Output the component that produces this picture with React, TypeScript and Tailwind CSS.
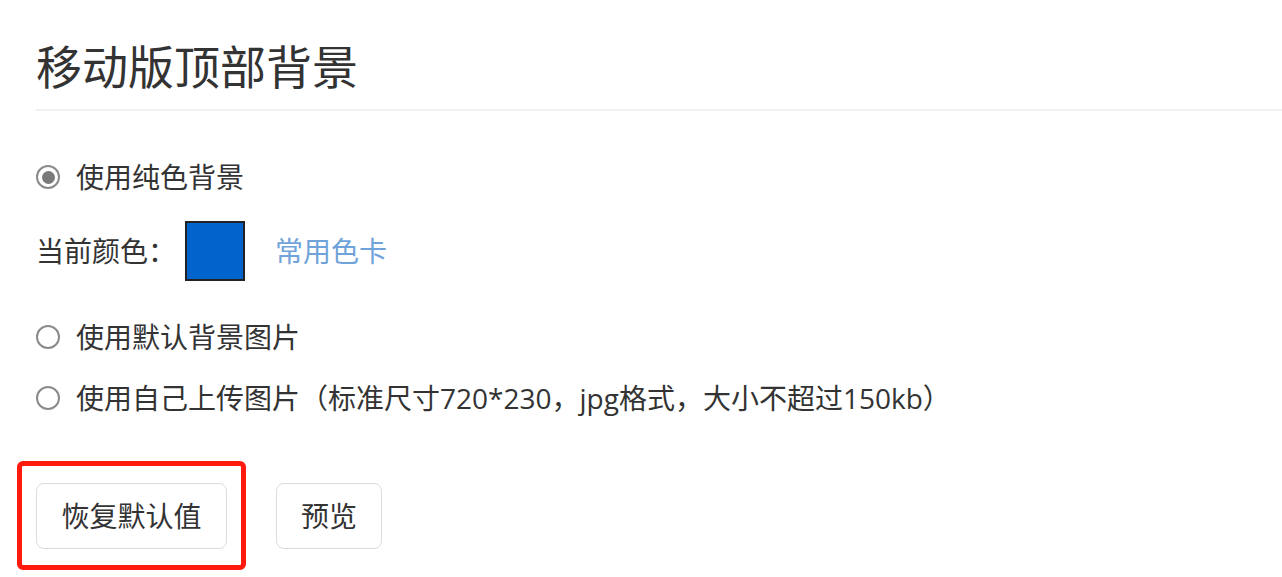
import React from 'react';

const Radio = ({ checked }: { checked?: boolean }) => (
  <span className="w-[24px] h-[24px] rounded-full border-2 border-[#8a8a8a] flex items-center justify-center shrink-0 bg-white">
    {checked && <span className="w-[13px] h-[13px] rounded-full bg-[#7a7a7a]" />}
  </span>
);

const Option = ({ label, checked, className }: { label: string; checked?: boolean; className?: string }) => (
  <label className={`flex items-center gap-[16px] h-[40px] leading-[40px] ${className ?? ''}`}>
    <Radio checked={checked} />
    <span>{label}</span>
  </label>
);

export default function App() {
  return (
    <div
      className="w-[1282px] h-[577px] overflow-hidden bg-white text-[#333] text-[28px]"
      style={{ fontFamily: '"Open Sans", "Noto Sans CJK SC", sans-serif' }}
    >
      <div className="ml-[36px] pt-[36px] pb-[13px] border-b-2 border-[#f0f0f0]">
        <h1 className="text-[46px] leading-[60px] font-normal text-[#333]">移动版顶部背景</h1>
      </div>

      <div className="pl-[36px]">
        <Option label="使用纯色背景" checked className="mt-[46px]" />

        <div className="flex items-center h-[60px] mt-[24px]">
          <span className="w-[149px] leading-[40px]">当前颜色：</span>
          <span className="w-[60px] h-[60px] bg-[#0064cc] border-2 border-[#222]" />
          <span className="ml-[30px] text-[#6fa3d9] leading-[40px]">常用色卡</span>
        </div>

        <Option label="使用默认背景图片" className="mt-[36px]" />
        <Option label="使用自己上传图片（标准尺寸720*230，jpg格式，大小不超过150kb）" className="mt-[21px]" />

        <div className="flex items-center gap-[49px] mt-[65px]">
          <div className="relative">
            <button className="h-[66px] w-[191px] border border-[#dcdcdc] rounded-[8px] bg-white text-[28px] text-[#333] leading-[40px]">
              恢复默认值
            </button>
            <span className="absolute -left-[19px] -right-[19px] -top-[22px] -bottom-[21px] border-[5px] border-[#ff1a0d] rounded-[6px] pointer-events-none" />
          </div>
          <button className="h-[66px] w-[106px] border border-[#dcdcdc] rounded-[8px] bg-white text-[28px] text-[#333] leading-[40px]">
            预览
          </button>
        </div>
      </div>
    </div>
  );
}
